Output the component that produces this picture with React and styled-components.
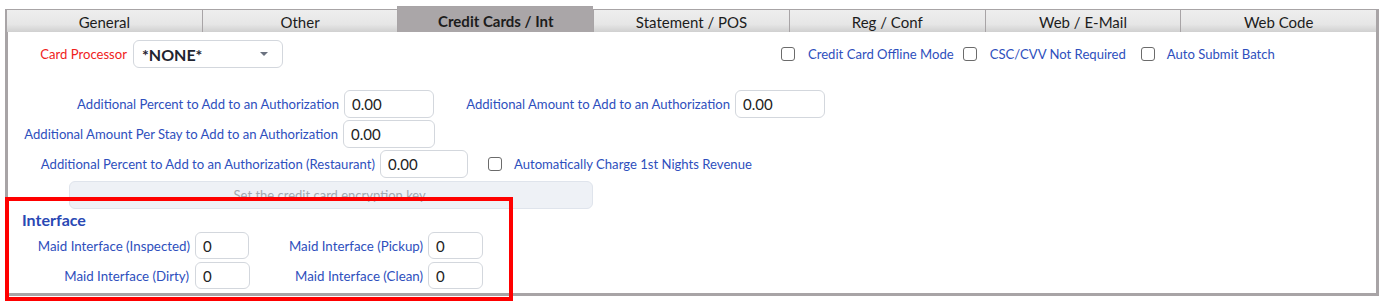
import React from 'react'
import styled, { createGlobalStyle } from 'styled-components'

const GlobalStyle = createGlobalStyle`
  body {
    margin: 0;
    background: #fff;
    font-family: Lato, "Open Sans", sans-serif;
  }
`

const tabs = ['General', 'Other', 'Credit Cards / Int', 'Statement / POS', 'Reg / Conf', 'Web / E-Mail', 'Web Code']

function Check({ label, gap, left, right }) {
  return (
    <CheckItem $gap={gap} $left={left} $right={right}>
      <Box />
      <Label as="span">{label}</Label>
    </CheckItem>
  )
}

function Field({ label, width, value, inputWidth }) {
  return (
    <>
      <Label $width={width}>{label}</Label>
      <Input $width={inputWidth}>{value}</Input>
    </>
  )
}

function App() {
  return (
    <Page>
      <GlobalStyle />
      <TabBar>
        {tabs.map((t) => (
          <Tab key={t} $active={t === 'Credit Cards / Int'}>{t}</Tab>
        ))}
      </TabBar>
      <Panel>
        <TopRow>
          <Label $red $width={119}>Card Processor</Label>
          <Select>
            <span>*NONE*</span>
            <Caret />
          </Select>
          <Checks>
            <Check label="Credit Card Offline Mode" right={9} />
            <Check label="CSC/CVV Not Required" right={15} />
            <Check label="Auto Submit Batch" gap={12} />
          </Checks>
        </TopRow>

        <Rows>
          <Row>
            <Field label="Additional Percent to Add to an Authorization" width={331} value="0.00" inputWidth={90} />
            <Field label="Additional Amount to Add to an Authorization" width={296} value="0.00" inputWidth={90} />
          </Row>
          <Row>
            <Field label="Additional Amount Per Stay to Add to an Authorization" width={330} value="0.00" inputWidth={92} />
          </Row>
          <Row>
            <Field label="Additional Percent to Add to an Authorization (Restaurant)" width={367} value="0.00" inputWidth={88} />
            <Check label="Automatically Charge 1st Nights Revenue" left={20} gap={12} />
          </Row>
          <KeyButton>Set the credit card encryption key.</KeyButton>
        </Rows>

        <Section>
          <Heading>Interface</Heading>
          <MaidGrid>
            <Field label="Maid Interface (Inspected)" width={182} value="0" inputWidth={54} />
            <Field label="Maid Interface (Pickup)" width={173} value="0" inputWidth={55} />
            <Field label="Maid Interface (Dirty)" width={181} value="0" inputWidth={55} />
            <Field label="Maid Interface (Clean)" width={173} value="0" inputWidth={55} />
          </MaidGrid>
        </Section>
      </Panel>
      <Highlight />
    </Page>
  )
}

export default App

const Page = styled.div`
  position: relative;
  width: 1374px;
  min-height: 307px;
  box-sizing: content-box;
  padding: 6px 0 0 5px;
`

const TabBar = styled.div`
  display: flex;
  align-items: flex-end;
  height: 26px;
`

const Tab = styled.div`
  flex: 1;
  height: ${(p) => (p.$active ? '26px' : '23px')};
  box-sizing: border-box;
  display: flex;
  align-items: center;
  justify-content: center;
  font-size: 15px;
  color: #1c1c1c;
  font-weight: ${(p) => (p.$active ? 700 : 400)};
  background: ${(p) =>
    p.$active ? '#aaa6a8' : 'linear-gradient(#eeeeee 0%, #e6e6e6 65%, #d0d0d0 100%)'};
  border-top: 1px solid #a8a4a6;
  border-left: 1px solid #a8a4a6;
  padding-top: ${(p) => (p.$active ? '3px' : '1px')};
  &:first-child {
    border-left: 2px solid #a8a4a6;
  }
  &:last-child {
    border-right: 3px solid #a8a4a6;
  }
`

const Panel = styled.div`
  border: 3px solid #a8a4a6;
  border-top: 0;
  height: 264px;
  box-sizing: border-box;
  padding-top: 8px;
`

const TopRow = styled.div`
  display: flex;
  align-items: center;
  height: 28px;
`

const Label = styled.div`
  font-size: 13.1px;
  color: ${(p) => (p.$red ? '#f0221c' : '#2e4fbd')};
  width: ${(p) => (p.$width ? `${p.$width}px` : 'auto')};
  flex: none;
  text-align: right;
  white-space: nowrap;
`

const Select = styled.div`
  margin-left: 6px;
  width: 150px;
  height: 28px;
  box-sizing: border-box;
  border: 1px solid #d3d7dd;
  border-radius: 6px;
  display: flex;
  align-items: center;
  justify-content: space-between;
  padding: 0 14px 0 8px;
  font-size: 16px;
  font-weight: 700;
  color: #1f2430;
`

const Caret = styled.span`
  width: 0;
  height: 0;
  border-left: 4px solid transparent;
  border-right: 4px solid transparent;
  border-top: 4px solid #6b7280;
`

const Checks = styled.div`
  display: flex;
  align-items: center;
  margin-left: 498px;
`

const CheckItem = styled.div`
  display: flex;
  align-items: center;
  gap: ${(p) => (p.$gap ? p.$gap : 13)}px;
  margin-left: ${(p) => (p.$left ? p.$left : 0)}px;
  margin-right: ${(p) => (p.$right ? p.$right : 0)}px;
`

const Box = styled.span`
  width: 14px;
  height: 14px;
  box-sizing: border-box;
  border: 1.5px solid #6b6b6b;
  border-radius: 3px;
  background: #fff;
`

const Rows = styled.div`
  margin-top: 22px;
  display: flex;
  flex-direction: column;
  gap: 2px;
`

const Row = styled.div`
  display: flex;
  align-items: center;
  height: 28px;
`

const Input = styled.div`
  margin-left: 5px;
  width: ${(p) => p.$width}px;
  height: 28px;
  box-sizing: border-box;
  border: 1px solid #d3d7dd;
  border-radius: 6px;
  display: flex;
  align-items: center;
  padding-left: 7px;
  font-size: 15px;
  color: #222;
  flex: none;
`

const KeyButton = styled.div`
  margin: 1px 0 0 61px;
  width: 524px;
  height: 28px;
  box-sizing: border-box;
  border: 1px solid #dfe4ec;
  border-radius: 6px;
  background: #eef1f6;
  display: flex;
  align-items: center;
  justify-content: center;
  font-size: 13px;
  color: #a3a8b0;
`

const Section = styled.div``

const Heading = styled.div`
  padding-left: 14px;
  font-size: 16px;
  font-weight: 700;
  color: #2a48b4;
  height: 23px;
  line-height: 22px;
`

const MaidGrid = styled.div`
  display: grid;
  grid-template-columns: repeat(2, auto auto);
  justify-content: start;
  align-items: center;
  row-gap: 3px;
  grid-auto-rows: 27px;
  ${Input} {
    height: 27px;
  }
  ${Label} {
    font-size: 13.3px;
  }
`

const Highlight = styled.div`
  position: absolute;
  left: 5px;
  top: 197px;
  width: 508px;
  height: 104px;
  box-sizing: border-box;
  border: 4px solid #ff0000;
  pointer-events: none;
`
